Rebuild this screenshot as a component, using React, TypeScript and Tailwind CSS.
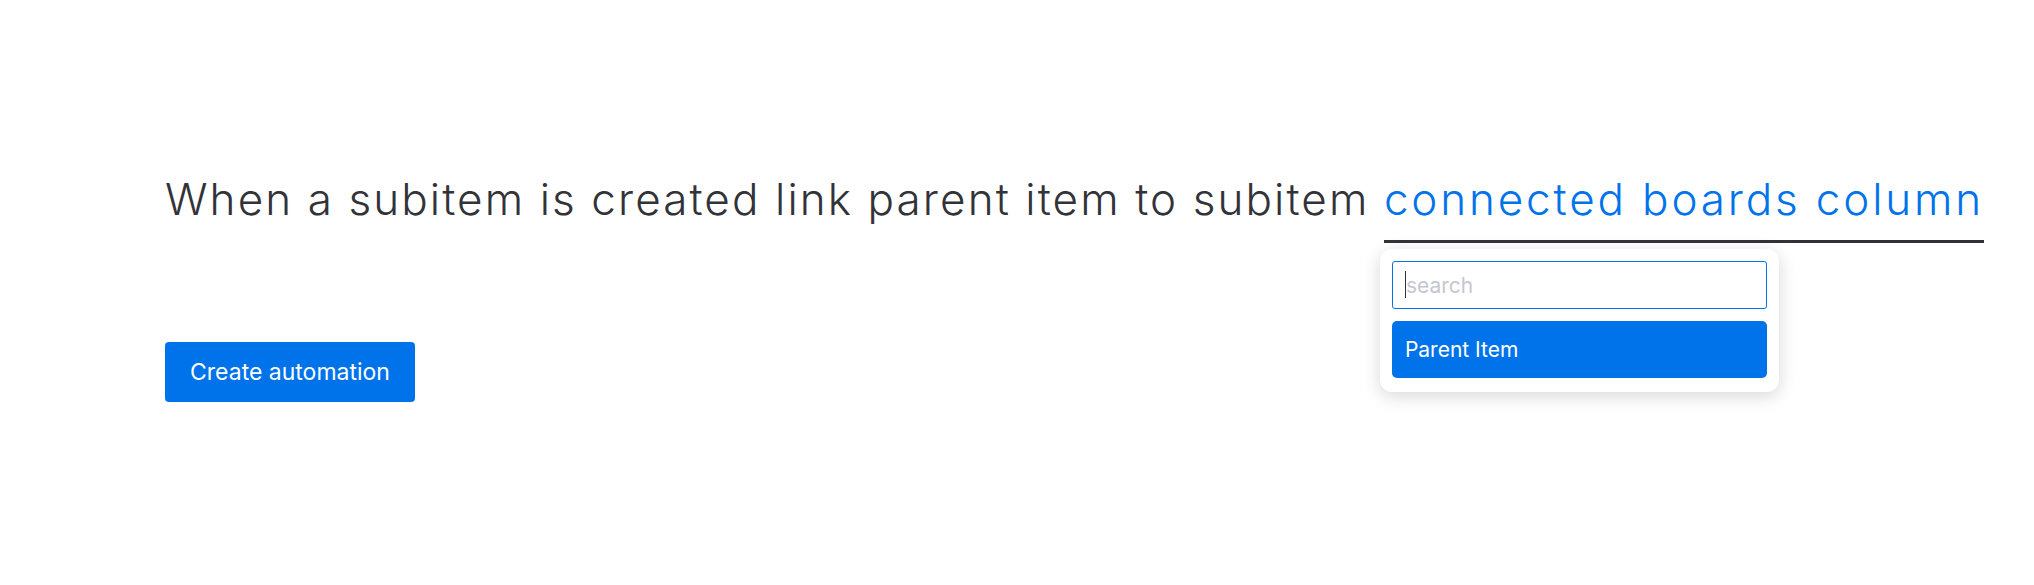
import React from 'react';

const headFont = { fontFamily: 'Inter, "Noto Sans", sans-serif' };

function ColumnDropdown() {
    return (
        <div className="absolute left-[-4px] top-[calc(100%+9px)] w-[399px] rounded-xl bg-white p-3 pb-[14px] text-[21px] font-normal leading-normal tracking-normal shadow-[0_4px_18px_rgba(0,0,0,0.16)]">
            <div className="relative">
                <input
                    className="h-[48px] w-full rounded-[3px] border border-[#0073ea] px-[13px] text-[21px] text-[#323338] outline-none placeholder:text-[#c5c7d0]"
                    placeholder="search"
                    readOnly
                />
                <span className="absolute left-[13px] top-[10px] h-[27px] w-px bg-[#323338]" />
            </div>
            <div className="mt-3 flex h-[57px] items-center rounded-[5px] bg-[#0073ea] px-[13px] text-white">
                Parent Item
            </div>
        </div>
    );
}

export default function App() {
    return (
        <div className="min-h-screen bg-white pl-[165px] pt-[169px]" style={headFont}>
            <div className="text-[44px] font-light leading-[60px] tracking-[2.1px] text-[#323338]">
                When a subitem is created link parent item to subitem{' '}
                <span className="relative inline-block border-b-[3px] border-[#323338] pb-[11px] tracking-[2.85px] text-[#0073ea]">
                    connected boards column
                    <ColumnDropdown />
                </span>
            </div>
            <button className="mt-[99px] h-[60px] rounded-[4px] bg-[#0073ea] px-[25px] text-[23px] text-white">
                Create automation
            </button>
        </div>
    );
}
